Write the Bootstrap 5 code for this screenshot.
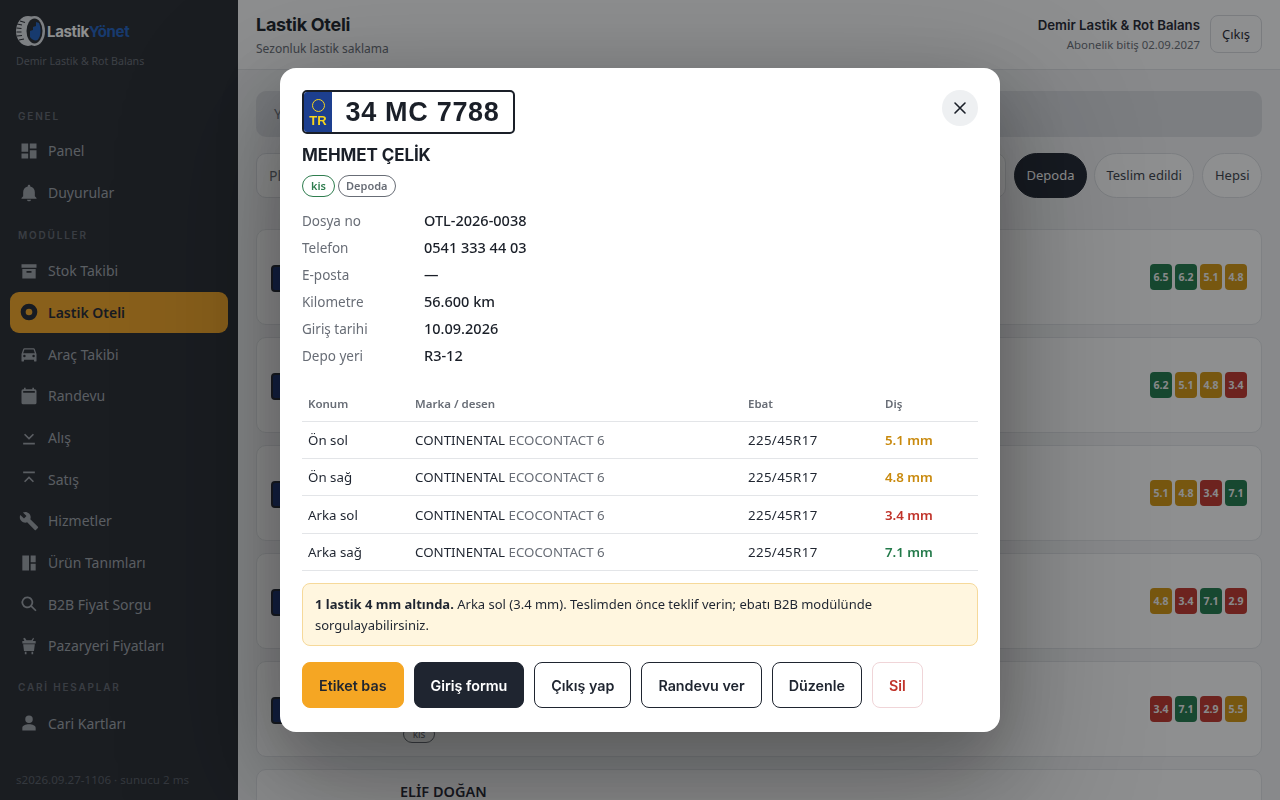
<!DOCTYPE html>
<html lang="tr">
<head>
<meta charset="utf-8">
<title>Lastik Oteli</title>
<link href="https://cdn.jsdelivr.net/npm/bootstrap@5.3.0/dist/css/bootstrap.min.css" rel="stylesheet">
<style>
html,body{height:800px;overflow:hidden}
body{font-family:"Noto Sans","Liberation Sans",sans-serif;background:#f3f4f5;color:#1f2530;font-size:14px}
.app-shell{height:800px}
.side{width:238px;flex:none;background:#25292f;padding:15px 10px 0;height:800px;overflow:hidden}
.brand{padding:0 6px;height:32px}
.brand-name{font:700 15px "Inter",sans-serif;letter-spacing:-.35px;color:#fff;margin-left:2px}
.brand-name span{color:#1f5fbf}
.brand-sub{font-size:10.6px;color:#666b74;padding:7px 6px 0;height:40px}
.sec-label{font:600 10px "Inter",sans-serif;letter-spacing:1.8px;color:#60656e;padding-left:8px;height:14px;line-height:14px}
.sec1{margin-top:22px}.sec2{margin-top:14.500px}.sec3{margin-top:13.500px}
.nav-it{height:41.700px;display:flex;align-items:center;gap:9px;padding-left:9px;font-size:14px;color:#9ea2a9;border-radius:9px}
.nav-it svg{width:20px;height:20px;fill:currentColor;flex:none}
.nav-first{margin-top:8px}
.sec1 + .nav-first{margin-top:7px}
.nav-it.nav-act{background:#f5a623;color:#1f2530;font-weight:600}
.side-foot{font-size:11.600px;color:#565b64;padding-left:6px;margin-top:27px;white-space:nowrap}
.main-col{min-width:0;height:800px;overflow:hidden}
.topbar{height:70px;background:#fff;border-bottom:1px solid #e3e5e8;padding:0 18px}
.title-wrap{padding-top:2px}
.page-title{font:700 18px "Inter",sans-serif;letter-spacing:-.3px;margin:0;line-height:24px;color:#1a1f28}
.page-sub{font-size:12px;color:#686d76;margin-top:3px}
.co-name{font:600 13.250px "Inter",sans-serif;margin-top:2px}
.co-sub{font-size:11.400px;color:#686d76;margin-top:3px}
.logout{font-size:13px;width:52px;height:38px;padding:0;margin-left:2px;border:1px solid #d9dbdf;border-radius:8px;color:#1f2530;background:#fff}
.content-pad{padding:21px 18px 0}
.head-box{height:46px;background:#dddfe3;border-radius:10px;padding:0 18px;line-height:46px;color:#686d76}
.filter-row{margin-top:16px;height:45px;white-space:nowrap}
.fake-input{border:1px solid #dddfe3;border-radius:10px;background:#fff;height:45px;line-height:43px;padding-left:12px;color:#686d76}
.pill-it{height:45px;line-height:43px;padding:0 11.500px;border:1px solid #dddfe3;background:#fff;border-radius:23px;font-size:13px;color:#3a3f4a;flex:none}
.pill-it.pill-on{background:#1f2530;border-color:#1f2530;color:#fff;margin-right:-1px}
.tire-list{margin-top:31px}
.tire-card{height:96px;background:#fff;border:1px solid #e3e5e8;border-radius:10px;margin-bottom:12px;padding:0 14px;position:relative}
.mini-plate{width:34px;height:27px;border-radius:4px;background:#16306f;border:2px solid #1f2530;margin-top:35px}
.chips{position:absolute;right:14px;top:34px;gap:3px}
.chip{width:22px;height:26px;border-radius:4px;color:#f4f4f4;font:700 10.500px/26px "Noto Sans",sans-serif;text-align:center}
.c-g{background:#1f7a4a}.c-y{background:#d4960f}.c-r{background:#c0332a}
.card-name{position:absolute;left:143px;top:11px;font:600 14.500px "Noto Sans",sans-serif}
.card-tag{position:absolute;left:146px;top:63px;height:18px;width:32px;border:1px solid #686d76;border-radius:9px;text-align:center;font-size:10px;line-height:16px;color:#686d76}
.shade{position:fixed;inset:0;background:rgba(15,17,20,.47)}
.sheet{position:fixed;left:280px;top:68px;width:720px;height:664px;background:#fff;border-radius:16px;padding:22px;box-shadow:0 24px 64px rgba(0,0,0,.22),0 50px 140px 30px rgba(0,0,0,.22)}
.plate{display:inline-flex;height:44px;width:213px;border:2px solid #1a1f28;border-radius:5px;overflow:hidden;background:#fff}
.plate-eu{width:28px;background:#1d3f8f;color:#f7d51d;font:700 13px/11px "Liberation Sans",sans-serif;text-align:center;display:flex;flex-direction:column;align-items:center;justify-content:center;gap:3px}
.plate-eu i{display:block;width:13px;height:13px;border:1px solid #f7d51d;border-radius:50%}
.plate-no{flex:1;text-align:center;font:700 27px/40px "Liberation Sans",sans-serif;letter-spacing:.7px;color:#1a1f28}
.close-x{width:36px;height:36px;border-radius:50%;background:#eef0f2;border:0;padding:0;position:absolute;right:22px;top:22px;display:flex;align-items:center;justify-content:center}
.cust{font:700 17px "Inter",sans-serif;letter-spacing:-.1px;margin:11px 0 0;line-height:20px;color:#1a1f28}
.tags{margin-top:10px;gap:3px}
.tagp{height:22px;line-height:20px;border-radius:11px;border:1px solid #686d76;font-size:11px;font-weight:600;color:#686d76;padding:0 7px}
.tagp.tag-g{border-color:#2f7d4f;color:#2f7d4f;padding:0 8px}
.dl-grid{display:grid;grid-template-columns:122px 1fr;margin:10px 0 0}
.dl-grid div{height:27px;line-height:27px}
.dl-grid .dl-k{color:#686d76;font-size:13.500px;line-height:29px}
.dl-v{color:#1a1f28;font-weight:500;font-size:14.500px}
.data-t{width:100%;margin-top:17px;border-collapse:collapse;font-size:13.300px}
.data-t th{font:600 11.500px "Noto Sans",sans-serif;color:#686d76;height:35px;border-bottom:1px solid #e3e5e8;padding:0 6px}
.data-t td{height:37.400px;border-bottom:1px solid #e3e5e8;padding:2px 6px 0}
.w-a{width:107px}.w-b{width:333px}.w-c{width:137px}
.muted-d{color:#686d76}
.size-t{letter-spacing:.35px}
.v-y{color:#c98a0e}.v-r{color:#c0332a}.v-g{color:#237a4a}
.val{font-weight:600}
.warn{margin-top:12px;background:#fff6df;border:1px solid #f6d99a;border-radius:8px;padding:10px 12px;font-size:13px;line-height:21px;height:63px}
.warn b{font-weight:700}
.acts{margin-top:16px;gap:10px}
.act{height:46px;padding:0 16px;border-radius:8px;font:600 14.300px "Inter",sans-serif;border:1px solid #1f2530;background:#fff;color:#1f2530}
.act.act-a{background:#f5a623;border-color:#f5a623}
.act.act-d{background:#1f2530;color:#fff}
.act.act-s{border-color:#f0d5d8;color:#c0332a}
</style>
</head>
<body>
<div class="d-flex app-shell">
  <aside class="side">
    <div class="brand d-flex align-items-center">
      <svg width="29" height="30" viewBox="0 0 29 30"><ellipse cx="12" cy="15" rx="12" ry="15" fill="#dfe2e6"/><path d="M1 8l5 1M.5 12l5 .5M.5 16l5 0M1 20l5-.5M3 24l5-1M4 5l5 1.500" stroke="#25292f" stroke-width="1.100"/><ellipse cx="18.500" cy="15" rx="10.500" ry="15" fill="#dfe2e6"/><ellipse cx="18.500" cy="15" rx="8" ry="12.500" fill="#25292f"/><path d="M14 21v-6l3-1v-3l3-1V6l3 1c1 2 1.500 5 1.500 8 0 4-1 7-3 9-2 1-5.500 0-7.500-3z" fill="#1f5fbf"/></svg>
      <span class="brand-name">Lastik<span>Yönet</span></span>
    </div>
    <div class="brand-sub">Demir Lastik &amp; Rot Balans</div>
    <div class="sec-label sec1">GENEL</div>
    <div class="nav-it nav-first"><svg viewBox="0 0 24 24"><path d="M3 3h8v10H3zM13 3h8v6h-8zM13 11h8v10h-8zM3 15h8v6H3z"/></svg>Panel</div>
    <div class="nav-it"><svg viewBox="0 0 24 24"><path d="M12 22a2.500 2.500 0 0 0 2.500-2h-5A2.500 2.500 0 0 0 12 22zm7-6v-5c0-3.300-2-6-5.500-6.800V3.500a1.500 1.500 0 0 0-3 0v.7C7 5 5 7.700 5 11v5l-2 2v1h18v-1z"/></svg>Duyurular</div>
    <div class="sec-label sec2">MODÜLLER</div>
    <div class="nav-it nav-first"><svg viewBox="0 0 24 24"><path d="M3 4h18v4H3zM4 9.500h16V21H4zm5 2.500v2h6v-2z" fill-rule="evenodd"/></svg>Stok Takibi</div>
    <div class="nav-it nav-act"><svg viewBox="0 0 24 24"><path d="M12 2a10 10 0 1 0 0 20 10 10 0 0 0 0-20zm0 6a4 4 0 1 1 0 8 4 4 0 0 1 0-8z" fill-rule="evenodd"/></svg>Lastik Oteli</div>
    <div class="nav-it"><svg viewBox="0 0 24 24"><path d="M18.900 6a1.500 1.500 0 0 0-1.400-1h-11a1.500 1.500 0 0 0-1.400 1L3 12v8a1 1 0 0 0 1 1h1a1 1 0 0 0 1-1v-1h12v1a1 1 0 0 0 1 1h1a1 1 0 0 0 1-1v-8zM6.500 16a1.500 1.500 0 1 1 0-3 1.500 1.500 0 0 1 0 3zm11 0a1.500 1.500 0 1 1 0-3 1.500 1.500 0 0 1 0 3zM5 11l1.500-4.500h11L19 11z" fill-rule="evenodd"/></svg>Araç Takibi</div>
    <div class="nav-it"><svg viewBox="0 0 24 24"><path d="M19 4h-1V2h-2v2H8V2H6v2H5a2 2 0 0 0-2 2v14a2 2 0 0 0 2 2h14a2 2 0 0 0 2-2V6a2 2 0 0 0-2-2zm0 4H5V6h14z" fill-rule="evenodd"/></svg>Randevu</div>
    <div class="nav-it"><svg viewBox="0 0 24 24"><path d="M5 19h14v2H5zM7.400 8 6 9.400l6 6 6-6L16.600 8 12 12.600z"/></svg>Alış</div>
    <div class="nav-it"><svg viewBox="0 0 24 24"><path d="M5 3h14v2H5zM7.400 16 6 14.600l6-6 6 6L16.600 16 12 11.400z"/></svg>Satış</div>
    <div class="nav-it"><svg viewBox="0 0 24 24"><path d="M22.700 19 13.600 9.900c.9-2.300.4-5-1.500-6.900-2-2-5-2.400-7.400-1.300L9 6 6 9 1.600 4.700C.4 7.100.9 10.100 2.900 12.100c1.900 1.900 4.600 2.400 6.900 1.500l9.100 9.100c.4.400 1 .4 1.400 0l2.300-2.300c.5-.4.5-1.100.1-1.400z"/></svg>Hizmetler</div>
    <div class="nav-it"><svg viewBox="0 0 24 24"><path d="M4 3h8v18H4zM14 3h6v8h-6zM14 13h6v8h-6z"/></svg>Ürün Tanımları</div>
    <div class="nav-it"><svg viewBox="0 0 24 24"><path d="M10 3a7 7 0 1 0 4.300 12.500l5.300 5.300 1.400-1.400-5.300-5.300A7 7 0 0 0 10 3zm0 2a5 5 0 1 1 0 10 5 5 0 0 1 0-10z"/></svg>B2B Fiyat Sorgu</div>
    <div class="nav-it"><svg viewBox="0 0 24 24"><path d="M7 2l2 3h6l2-3 1 1-1.500 3H20v3H4V6h2.500L5 3zM5 10h14l-1 8H6zM7 19h2v3H7zM15 19h2v3h-2z"/></svg>Pazaryeri Fiyatları</div>
    <div class="sec-label sec3">CARİ HESAPLAR</div>
    <div class="nav-it nav-first"><svg viewBox="0 0 24 24"><path d="M12 3a4.500 4.500 0 1 1 0 9 4.500 4.500 0 0 1 0-9zM4 21v-3c0-3 4-4.500 8-4.500s8 1.500 8 4.500v3z"/></svg>Cari Kartları</div>
    <div class="side-foot">s2026.09.27-1106 · sunucu 2 ms</div>
  </aside>
  <div class="main-col flex-grow-1">
    <header class="topbar d-flex justify-content-between align-items-center">
      <div class="title-wrap">
        <h1 class="page-title">Lastik Oteli</h1>
        <div class="page-sub">Sezonluk lastik saklama</div>
      </div>
      <div class="d-flex align-items-center gap-2">
        <div class="text-end">
          <div class="co-name">Demir Lastik &amp; Rot Balans</div>
          <div class="co-sub">Abonelik bitiş 02.09.2027</div>
        </div>
        <button class="btn logout">Çıkış</button>
      </div>
    </header>
    <div class="content-pad">
      <div class="head-box">Yaklaşan</div>
      <div class="filter-row d-flex align-items-center gap-2">
        <div class="fake-input flex-grow-1">Plaka</div>
        <div class="pill-it pill-on">Depoda</div>
        <div class="pill-it">Teslim edildi</div>
        <div class="pill-it">Hepsi</div>
      </div>
      <div class="tire-list">
        <div class="tire-card"><div class="mini-plate"></div><div class="chips d-flex"><div class="chip c-g">6.5</div><div class="chip c-g">6.2</div><div class="chip c-y">5.1</div><div class="chip c-y">4.8</div></div></div>
        <div class="tire-card"><div class="mini-plate"></div><div class="chips d-flex"><div class="chip c-g">6.2</div><div class="chip c-y">5.1</div><div class="chip c-y">4.8</div><div class="chip c-r">3.4</div></div></div>
        <div class="tire-card"><div class="mini-plate"></div><div class="chips d-flex"><div class="chip c-y">5.1</div><div class="chip c-y">4.8</div><div class="chip c-r">3.4</div><div class="chip c-g">7.1</div></div></div>
        <div class="tire-card"><div class="mini-plate"></div><div class="chips d-flex"><div class="chip c-y">4.8</div><div class="chip c-r">3.4</div><div class="chip c-g">7.1</div><div class="chip c-r">2.9</div></div></div>
        <div class="tire-card"><div class="mini-plate"></div><div class="card-tag">kis</div><div class="chips d-flex"><div class="chip c-r">3.4</div><div class="chip c-g">7.1</div><div class="chip c-r">2.9</div><div class="chip c-y">5.5</div></div></div>
        <div class="tire-card"><div class="card-name">ELİF DOĞAN</div></div>
      </div>
    </div>
  </div>
</div>
<div class="shade"></div>
<div class="sheet">
  <button class="close-x" aria-label="Kapat"><svg width="14" height="14" viewBox="0 0 14 14"><path d="M2 2l10 10M12 2L2 12" stroke="#1a1f28" stroke-width="1.600" stroke-linecap="round"/></svg></button>
  <div class="plate"><div class="plate-eu"><i></i>TR</div><div class="plate-no">34 MC 7788</div></div>
  <h2 class="cust">MEHMET ÇELİK</h2>
  <div class="tags d-flex"><span class="tagp tag-g">kis</span><span class="tagp">Depoda</span></div>
  <div class="dl-grid">
    <div class="dl-k">Dosya no</div><div class="dl-v">OTL-2026-0038</div>
    <div class="dl-k">Telefon</div><div class="dl-v">0541 333 44 03</div>
    <div class="dl-k">E-posta</div><div class="dl-v">—</div>
    <div class="dl-k">Kilometre</div><div class="dl-v">56.600 km</div>
    <div class="dl-k">Giriş tarihi</div><div class="dl-v">10.09.2026</div>
    <div class="dl-k">Depo yeri</div><div class="dl-v">R3-12</div>
  </div>
  <table class="data-t">
    <thead><tr><th class="w-a">Konum</th><th class="w-b">Marka / desen</th><th class="w-c">Ebat</th><th>Diş</th></tr></thead>
    <tbody>
      <tr><td>Ön sol</td><td>CONTINENTAL <span class="muted-d">ECOCONTACT 6</span></td><td class="size-t">225/45R17</td><td class="val v-y">5.1 mm</td></tr>
      <tr><td>Ön sağ</td><td>CONTINENTAL <span class="muted-d">ECOCONTACT 6</span></td><td class="size-t">225/45R17</td><td class="val v-y">4.8 mm</td></tr>
      <tr><td>Arka sol</td><td>CONTINENTAL <span class="muted-d">ECOCONTACT 6</span></td><td class="size-t">225/45R17</td><td class="val v-r">3.4 mm</td></tr>
      <tr><td>Arka sağ</td><td>CONTINENTAL <span class="muted-d">ECOCONTACT 6</span></td><td class="size-t">225/45R17</td><td class="val v-g">7.1 mm</td></tr>
    </tbody>
  </table>
  <div class="warn"><b>1 lastik 4 mm altında.</b> Arka sol (3.4 mm). Teslimden önce teklif verin; ebatı B2B modülünde sorgulayabilirsiniz.</div>
  <div class="acts d-flex">
    <button class="btn act act-a">Etiket bas</button>
    <button class="btn act act-d">Giriş formu</button>
    <button class="btn act">Çıkış yap</button>
    <button class="btn act">Randevu ver</button>
    <button class="btn act">Düzenle</button>
    <button class="btn act act-s">Sil</button>
  </div>
</div>
<script src="https://cdn.jsdelivr.net/npm/bootstrap@5.3.0/dist/js/bootstrap.bundle.min.js"></script>
</body>
</html>
